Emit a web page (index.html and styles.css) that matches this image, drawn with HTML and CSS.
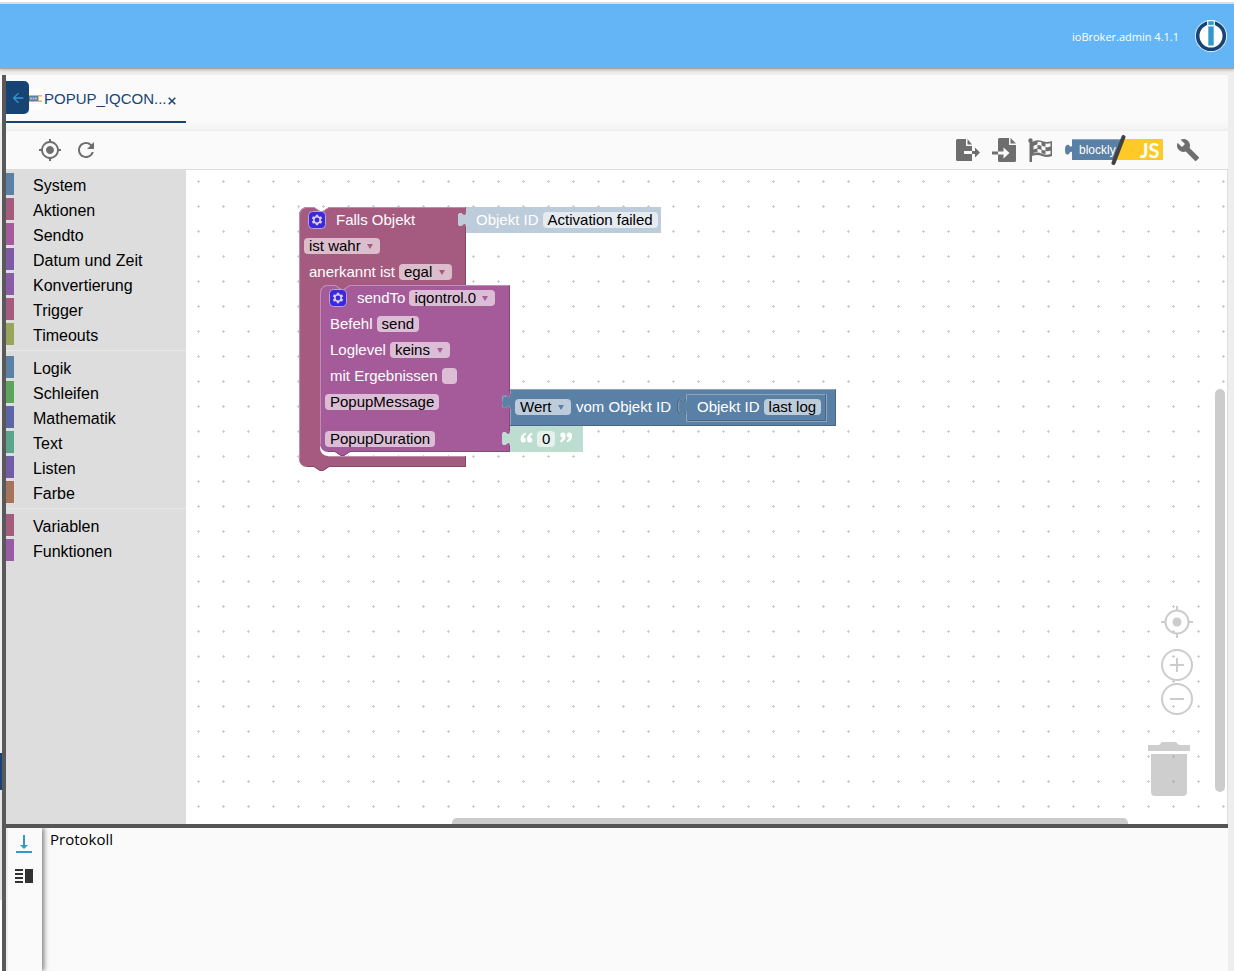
FILE: index.html
```html
<!DOCTYPE html>
<html lang="de">
<head>
<meta charset="utf-8">
<title>ioBroker.admin</title>
<link rel="stylesheet" href="styles.css">
</head>
<body>
<header class="topbar">
  <span class="version">ioBroker.admin 4.1.1</span>
  <svg class="logo" viewBox="0 0 32 32" width="32" height="32" aria-label="ioBroker">
    <circle cx="16" cy="16" r="16" fill="#e8f0f7"/>
    <circle cx="16" cy="16" r="13.3" fill="#fff" stroke="#174475" stroke-width="3.6"/>
    <rect x="12" y="0" width="8" height="7" fill="#e8f0f7"/>
    <rect x="13.3" y="1.3" width="5.4" height="3.6" fill="#3399cc"/>
    <rect x="13.3" y="6.5" width="5.4" height="19" fill="#3399cc"/>
  </svg>
</header>
<div class="workarea">
  <div class="edge"><i class="edge-a"></i><i class="edge-b"></i><i class="edge-c"></i><i class="edge-d"></i><i class="edge-e"></i></div>
  <div class="vsplit"></div>
  <main class="main">
    <nav class="tabs">
      <button class="back" aria-label="Zurück"><svg viewBox="0 0 24 24" width="16" height="16"><path fill="#3399cc" d="M20 11H7.830l5.590-5.590L12 4l-8 8 8 8 1.410-1.410L7.830 13H20v-2z"/></svg></button>
      <div class="tab">
        <svg class="tab-icon" viewBox="0 0 14 22" width="14" height="22"><rect x="-4" width="18" height="22" rx="3" fill="#fff"/><rect x="0" y="7" width="13" height="7" fill="#ddc04a"/><rect x="0" y="8" width="9" height="5" fill="#5b80a5"/><path d="M1 10.500h2m.5 0h2m.5 0h2" stroke="#a9c0d6" stroke-width="2"/><path d="M13 8.500h-3v4h3z" fill="#fff"/></svg>
        <a class="tab-label" href="#">POPUP_IQCON...</a>
        <button class="tab-close" aria-label="Schließen"><svg viewBox="0 0 8 8" width="8" height="8"><path d="M.7.7l6.600 6.600M7.300.7L.7 7.300" stroke="#174475" stroke-width="1.500"/></svg></button>
      </div>
    </nav>
    <div class="toolbar">
      <button class="icon" aria-label="Lokalisieren"><svg viewBox="0 0 24 24" width="24" height="24"><path d="M12 8c-2.210 0-4 1.790-4 4s1.790 4 4 4 4-1.790 4-4-1.790-4-4-4zm8.940 3A8.994 8.994 0 0 0 13 3.060V1h-2v2.060A8.994 8.994 0 0 0 3.060 11H1v2h2.060A8.994 8.994 0 0 0 11 20.940V23h2v-2.060A8.994 8.994 0 0 0 20.940 13H23v-2h-2.060zM12 19c-3.870 0-7-3.130-7-7s3.130-7 7-7 7 3.130 7 7-3.130 7-7 7z"/></svg></button>
      <button class="icon" aria-label="Neu laden"><svg viewBox="0 0 24 24" width="24" height="24"><path d="M17.650 6.350A7.958 7.958 0 0 0 12 4c-4.420 0-7.990 3.580-7.990 8s3.570 8 7.990 8c3.730 0 6.840-2.550 7.730-6h-2.080A5.990 5.990 0 0 1 12 18c-3.310 0-6-2.690-6-6s2.690-6 6-6c1.660 0 3.140.690 4.220 1.780L13 11h7V4l-2.350 2.350z"/></svg></button>
      <span class="spacer"></span>
      <button class="icon" aria-label="Exportieren"><svg viewBox="0 0 24 24" width="24" height="24"><path d="M1.500 1H10v7h6v5H8v3h8v7H1.500Q0 23 0 21.500v-19Q0 1 1.500 1z"/><path d="M11.500 1L16 6.500h-4.500z"/><path d="M16 13h3V9.500l5 5-5 5V16h-3z"/></svg></button>
      <button class="icon" aria-label="Importieren"><svg viewBox="0 0 24 24" width="24" height="24"><path d="M7.500 0H17v7h7v15.500q0 1.500-1.500 1.500h-15Q6 24 6 22.500V1.500Q6 0 7.500 0z"/><path d="M18.500 0L24 5.500h-5.500z"/><path d="M0 13.500h6v3H0z"/><path d="M6 13.500h5.500V9.500l6 5.500-6 5.500v-4H6z" fill="#fafafa"/></svg></button>
      <button class="icon" aria-label="Blöcke prüfen"><svg viewBox="0 0 24 24" width="24" height="24"><circle cx="2.500" cy="2.500" r="2.200"/><path d="M1.500 2h2.500v22H1.500z"/><path d="M4 4q5-3 10-1t10 0v15q-5 2-10 0T4 18z"/><path fill="#fafafa" d="M5.500 8q3-2 4-1.500V4q3-.5 4 .5v3q3 1.500 4 1V5.500q3 .5 5-.5v3.500q-3 1-5 .5v3.500q-3 0-4-1v-3.500q-2-1-4-1v3.500q-2 0-4 1zM5.500 15q2-1 4-1v-3q2 0 4 1v3q2 1 4 1v-3q3 .5 5-.5v3.500q-3 1-5 .5-2 0-4-1-2-1-4-1-2 0-4 1z"/></svg></button>
      <button class="icon mode" aria-label="Blockly / JS"><svg viewBox="0 0 100 30" width="100" height="30"><path fill="#5b80a5" d="M8 4h52l-8 21H8v-8q-2-1-3 2-4 2-4-4t4-5q1 3 3 1z"/><path d="M8 4.500h48" stroke="#8ca6c0"/><path fill="#ffca28" d="M60 4h39v21H51z"/><text x="15" y="19" class="mode-a">blockly</text><text x="76" y="23" class="mode-b">JS</text><path d="M59.500 2L49.500 28" stroke="#424242" stroke-width="4" stroke-linecap="round"/></svg></button>
      <button class="icon" aria-label="Einstellungen"><svg viewBox="0 0 24 24" width="24" height="24"><path d="M22.700 19l-9.100-9.100c.900-2.300.400-5-1.500-6.900-2-2-5-2.400-7.400-1.300L9 6 6 9 1.600 4.700C.400 7.100.900 10.100 2.900 12.100c1.900 1.900 4.600 2.400 6.900 1.500l9.100 9.100c.400.400 1 .400 1.400 0l2.300-2.300c.500-.400.500-1.100.100-1.400z"/></svg></button>
    </div>
    <section class="editor">
      <nav class="toolbox">
        <button class="cat c-blue">System</button>
        <button class="cat c-rose">Aktionen</button>
        <button class="cat c-pink">Sendto</button>
        <button class="cat c-violet">Datum und Zeit</button>
        <button class="cat c-purple">Konvertierung</button>
        <button class="cat c-rose">Trigger</button>
        <button class="cat c-olive">Timeouts</button>
        <hr class="sep">
        <button class="cat c-blue">Logik</button>
        <button class="cat c-green">Schleifen</button>
        <button class="cat c-indigo">Mathematik</button>
        <button class="cat c-teal">Text</button>
        <button class="cat c-list">Listen</button>
        <button class="cat c-brown">Farbe</button>
        <hr class="sep">
        <button class="cat c-rose">Variablen</button>
        <button class="cat c-func">Funktionen</button>
      </nav>
      <div class="canvas">
        <svg class="grid" width="100%" height="100%"><defs><pattern id="cross" width="25" height="25" patternUnits="userSpaceOnUse"><path d="M11 11.500h3M12.500 10v3" stroke="#ccc"/></pattern></defs><rect width="100%" height="100%" fill="url(#cross)"/></svg>

        <div class="block b-if">
          <svg class="shape"><path fill="#a55b80" d="M0 8A8 8 0 0 1 8 0H15l6 4h3l6-4H167V5c0 10-8-8-8 7.500s8-2.500 8 7.500V78H51l-6 4h-3l-6-4h-7a8 8 0 0 0-8 8v155a8 8 0 0 0 8 8H167V260H30l-6 4h-3l-6-4H8a8 8 0 0 1-8-8z"/><path class="hi" stroke="#c08ca6" d="M.5 252V8A7.500 7.500 0 0 1 8 .5H15l6 4h3l6-4H166M29 249.500H166"/><path class="hi" stroke="#844966" d="M166.500 20V78M166.500 249v10.500H30l-6 4h-3l-6-4H8"/></svg>
          <div class="row"><svg class="gear" viewBox="0 0 18 18" width="18" height="18"><use href="#gear"/></svg><span class="lbl">Falls Objekt</span></div>
          <div class="row"><label class="drop"><select aria-label="Bedingung"><option>ist wahr</option></select></label></div>
          <div class="row"><span class="lbl">anerkannt ist</span><label class="drop"><select aria-label="anerkannt ist"><option>egal</option></select></label></div>
        </div>

        <div class="block b-send">
          <svg class="shape"><defs><g id="gear"><rect x=".5" y=".5" width="17" height="17" rx="4" fill="#3b28d8" stroke="#b8a5e0"/><circle cx="9" cy="9" r="3.200" fill="none" stroke="#dccdf5" stroke-width="1.600"/><path stroke="#dccdf5" stroke-width="2.400" d="M9 3.700v1.800M9 12.500v1.800M4.400 6.350l1.560.9M12.040 10.750l1.560.9M4.400 11.650l1.560-.9M12.040 7.250l1.560-.9"/></g></defs><path fill="#a55b99" d="M0 8A8 8 0 0 1 8 0H15l6 4h3l6-4H190V109c0 10-8-8-8 7.500s8-2.500 8 7.500V146c0 10-8-8-8 7.500s8-2.500 8 7.500v6H30l-6 4h-3l-6-4H8a8 8 0 0 1-8-8z"/><path class="hi" stroke="#c08cb8" d="M.5 159V8A7.500 7.500 0 0 1 8 .5H15l6 4h3l6-4H189"/><path class="hi" stroke="#84497a" d="M189.500 1V109M189.500 124v22M189.500 161v5.500H30l-6 4h-3l-6-4H8"/></svg>
          <div class="row"><svg class="gear" viewBox="0 0 18 18" width="18" height="18"><use href="#gear"/></svg><span class="lbl">sendTo</span><label class="drop"><select aria-label="sendTo"><option>iqontrol.0</option></select></label></div>
          <div class="row"><span class="lbl">Befehl</span><span class="field">send</span></div>
          <div class="row"><span class="lbl">Loglevel</span><label class="drop"><select aria-label="Loglevel"><option>keins</option></select></label></div>
          <div class="row"><label class="lbl" for="results">mit Ergebnissen</label><input class="check" type="checkbox" id="results"></div>
          <div class="row tall"><span class="field">PopupMessage</span></div>
          <div class="row"><span class="field">PopupDuration</span></div>
        </div>

        <div class="block b-oid">
          <svg class="shape"><path fill="#bdccdb" d="M0 0H195V26H0V20c0-10-8 8-8-7.500s8 2.500 8-7.500z"/></svg>
          <div class="row"><span class="lbl">Objekt ID</span><span class="field">Activation failed</span></div>
        </div>

        <div class="block b-val">
          <svg class="shape"><path fill="#5b80a5" d="M0 0H326V37H0V20c0-10-8 8-8-7.500s8 2.500 8-7.500z"/><path class="hi" stroke="#8ca6c0" d="M.5 5V.5H325M-4 7.500q-4-1-3.500 5M.5 37V20"/><path class="hi" stroke="#496684" d="M325.500 1V36.500H0"/><path class="hi" stroke="#8ca6c0" d="M176.500 32.500H316.500V5M176.500 32V25c0-10-8 8-8-7.500s8 2.500 8-7.500V5.500H315"/><path class="hi" stroke="#496684" d="M178 31.500H315.500V6M175.500 10c0 10-8-8-8 7.500s8-2.500 8 7.500"/></svg>
          <div class="row mid"><label class="drop"><select aria-label="Attribut"><option>Wert</option></select></label><span class="lbl in">vom Objekt ID</span><span class="lbl inner">Objekt ID</span><span class="field">last log</span></div>
        </div>

        <div class="block b-text">
          <svg class="shape"><path fill="#bdddd1" d="M0 0H73V26H0V20c0-10-8 8-8-7.500s8 2.500 8-7.500z"/><g fill="#fff"><path id="q" d="M15.500 6.500q-5 2-5 6.500 0 3.500 2.800 3.500 2.500 0 2.500-2.500t-2.300-2.300q.3-2.200 2.500-3.700zM22 6.500q-5 2-5 6.500 0 3.500 2.800 3.500 2.500 0 2.500-2.500t-2.300-2.300q.3-2.200 2.500-3.700z"/><use href="#q" transform="rotate(180 36.300 11.500)"/></g></svg>
          <div class="row quoted"><span class="field">0</span></div>
        </div>

        <div class="zoomctl">
          <button class="zoom gap" aria-label="Zentrieren"><svg viewBox="0 0 32 32" width="32" height="32"><circle cx="16" cy="16" r="11.500"/><circle cx="16" cy="16" r="4.500" class="dot"/><path d="M16 0v4.500M16 27.500V32M0 16h4.500M27.500 16H32"/></svg></button>
          <button class="zoom" aria-label="Vergrößern"><svg viewBox="0 0 32 32" width="32" height="32"><circle cx="16" cy="16" r="15"/><path d="M9 16h14M16 9v14"/></svg></button>
          <button class="zoom" aria-label="Verkleinern"><svg viewBox="0 0 32 32" width="32" height="32"><circle cx="16" cy="16" r="15"/><path d="M9 16h14"/></svg></button>
        </div>
        <svg class="trash" viewBox="0 0 42 54" width="42" height="54"><path d="M0 3h11l3-3h14l3 3h11v6H0zM3 12h36v38q0 4-4 4H7q-4 0-4-4z"/></svg>
        <div class="vbar"></div>
        <div class="hbar"></div>
      </div>
    </section>
    <div class="hsplit"></div>
    <section class="log">
      <div class="logtools">
        <button class="lt" aria-label="Zum Ende"><svg viewBox="0 0 18 18" width="18" height="18"><path fill="#3399cc" d="M8 0h2v10h3l-4 4-4-4h3zM1 16h16v2H1z"/></svg></button>
        <button class="lt" aria-label="Layout"><svg viewBox="0 0 18 14" width="18" height="14"><path fill="#333" d="M0 0h8v2H0zM0 4h8v2H0zM0 8h8v2H0zM0 12h8v2H0zM10 0h8v14h-8z"/></svg></button>
      </div>
      <div class="logbody">Protokoll</div>
    </section>
  </main>
</div>
</body>
</html>
```
FILE: styles.css
```css
* { box-sizing: border-box; }
body { margin: 0; height: 100vh; display: flex; flex-direction: column; background: #eee; font-family: "Liberation Sans", Arial, sans-serif; overflow: hidden; }
button { border: 0; margin: 0; padding: 0; background: none; font: inherit; color: inherit; text-align: left; }
button svg { display: block; }

.topbar { height: 69px; flex: none; border-top: 2px solid #fff; border-bottom: 1px solid #a5a5a5; background: linear-gradient(#ddd 2px, #64b5f6 2px); box-shadow: 0 1px 3px rgba(0,0,0,.25); display: flex; align-items: center; justify-content: flex-end; gap: 16px; padding: 2px 7px 0 0; color: #fff; position: relative; }
.version { font: 11px "Open Sans", "Noto Sans", sans-serif; }

.workarea { flex: 1; min-height: 0; display: flex; margin: 6px 6px 0 0; }
.edge { width: 2px; display: flex; flex-direction: column; }
.edge-a { height: 48px; background: #fafafa; }
.edge-b { flex: 630; background: #eee; }
.edge-c { height: 37px; background: #174475; }
.edge-d { flex: 110; background: #e4e4e4; }
.edge-e { flex: 71; background: #fff; }
.vsplit { width: 4px; background: #595959; }
.main { flex: 1; min-width: 0; display: flex; flex-direction: column; background: #fafafa; }

.tabs { height: 56px; flex: none; display: flex; align-items: flex-start; box-shadow: inset 0 -8px 8px -6px rgba(0,0,0,.05); border-bottom: 1px solid #eee; }
.back { width: 23px; height: 33px; margin-top: 6px; border-radius: 0 5px 5px 0; background: #174475; display: flex; align-items: center; justify-content: center; }
.tab { width: 157px; height: 48px; display: flex; align-items: center; color: #174475; position: relative; }
.tab::after { content: ""; position: absolute; left: -23px; right: 0; bottom: 0; height: 2px; background: #174475; }
.tab-icon { flex: none; }
.tab-label { color: inherit; text-decoration: none; font-size: 15px; line-height: 20px; margin-left: 1px; }
.tab-close { margin: 4px 0 0 auto; padding-right: 10px; }

.toolbar { height: 39px; flex: none; display: flex; align-items: center; gap: 12px; padding: 0 28px 0 32px; border-bottom: 1px solid #ddd; }
.icon svg { fill: #6e6e6e; }
.spacer { flex: 1; }
.mode-a { font: 12px "Liberation Sans", Arial, sans-serif; fill: #fff; }
.mode-b { font: bold 20px Lato, sans-serif; fill: #fff; }

.editor { flex: 1; min-height: 0; display: flex; }
.toolbox { width: 180px; flex: none; background: #ddd; padding-top: 3px; }
.cat { display: block; width: 100%; height: 22px; margin-bottom: 3px; padding: 3px 0 0 19px; border-left: 8px solid; font-size: 16px; line-height: 19px; color: #000; }
.c-blue { border-color: #5b80a5; }
.c-rose { border-color: #a55b80; }
.c-pink { border-color: #a55b99; }
.c-violet { border-color: #805ba5; }
.c-purple { border-color: #8c5ba5; }
.c-olive { border-color: #99a55b; }
.c-green { border-color: #5ba55b; }
.c-indigo { border-color: #5b67a5; }
.c-teal { border-color: #5ba58c; }
.c-list { border-color: #745ba5; }
.c-brown { border-color: #a5745b; }
.c-func { border-color: #995ba5; }
.sep { border: 0; height: 1px; margin: 5px 0; background: #e8e8e8; }

.canvas { flex: 1; min-width: 0; position: relative; overflow: hidden; background: #fff; border-right: 1px solid #ddd; }
.grid { position: absolute; inset: 0; }
.block { position: absolute; font-size: 15px; line-height: 16px; color: #fff; white-space: nowrap; }
.shape { position: absolute; left: 0; top: 0; width: 100%; height: 100%; overflow: visible; }
.hi { fill: none; }
.b-if { left: 113px; top: 37px; width: 167px; height: 260px; --ink: #a55b80; }
.b-send { left: 134px; top: 115px; width: 190px; height: 167px; --ink: #a55b99; }
.b-oid { left: 280px; top: 37px; width: 195px; }
.b-val { left: 324px; top: 219px; width: 326px; --ink: #5b80a5; }
.b-text { left: 324px; top: 256px; width: 73px; }
.row { position: relative; height: 26px; display: flex; align-items: center; gap: 4px; padding-left: 5px; }
.row.tall { height: 37px; padding-bottom: 11px; }
.row.mid { height: 36px; }
.quoted { padding-left: 27px; }
.lbl { margin-left: 5px; }
.gear + .lbl { margin-left: 6px; }
.lbl.in { margin-left: 1px; }
.lbl.inner { margin-left: 22px; }
.gear { margin: 0 0 0 4px; }
.field, .drop { height: 16px; border-radius: 4px; padding: 0 5px; background: rgba(255,255,255,.6); color: #000; }
.drop { display: flex; gap: 6px; align-items: center; }
.drop::after { content: ""; border: 3px solid transparent; border-top: 5px solid var(--ink); border-bottom: 0; margin-right: 2px; }
.drop select { appearance: none; border: 0; padding: 0; margin: 0; background: none; font: inherit; color: #000; height: 16px; }
.check { appearance: none; width: 15px; height: 16px; margin: 0; border-radius: 4px; background: rgba(255,255,255,.6); }

.zoomctl { position: absolute; right: 34px; bottom: 109px; display: flex; flex-direction: column; gap: 2px; }
.zoom.gap { margin-bottom: 9px; }
.zoom svg { fill: none; stroke: #ccc; stroke-width: 2; }
.zoom .dot { fill: #ccc; stroke: none; }
.trash { position: absolute; right: 37px; bottom: 28px; fill: rgba(150,150,150,.47); }
.vbar { position: absolute; right: 2px; top: 219px; bottom: 32px; width: 10px; border-radius: 5px; background: #ccc; }
.hbar { position: absolute; left: 266px; right: 99px; bottom: -4px; height: 10px; border-radius: 5px; background: #ccc; }

.hsplit { height: 4px; flex: none; background: #555; }
.log { height: 143px; flex: none; display: flex; }
.logtools { width: 36px; border-left: 2px solid #eee; box-shadow: 2px 0 5px rgba(0,0,0,.5); display: flex; flex-direction: column; align-items: flex-start; gap: 16px; padding: 7px 0 0 7px; clip-path: inset(0 -10px 0 0); }
.logbody { padding: 1px 8px; font: 15px/20px "Open Sans", "Noto Sans", sans-serif; color: #000; }
```
